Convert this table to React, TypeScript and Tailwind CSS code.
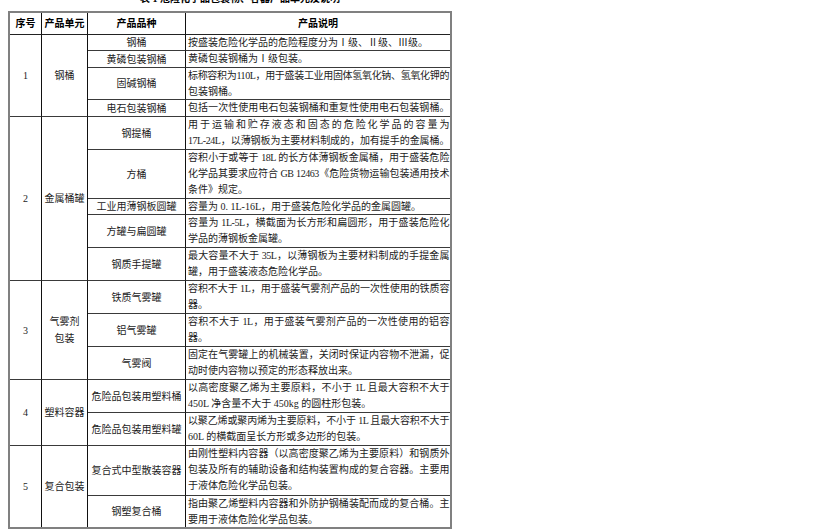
import React from 'react'

type Item = { name: string; lines: string[]; fullLast?: boolean }
type Group = { no: string; unit: string[]; span: string; items: Item[] }

const groups: Group[] = [
  {
    no: '1',
    unit: ['钢桶'],
    span: 'row-span-4',
    items: [
      { name: '钢桶', lines: ['按盛装危险化学品的危险程度分为Ⅰ级、Ⅱ级、Ⅲ级。'] },
      { name: '黄磷包装钢桶', lines: ['黄磷包装钢桶为Ⅰ级包装。'] },
      { name: '固碱钢桶', lines: ['标称容积为110L，用于盛装工业用固体氢氧化钠、氢氧化钾的', '包装钢桶。'] },
      { name: '电石包装钢桶', lines: ['包括一次性使用电石包装钢桶和重复性使用电石包装钢桶。'], fullLast: true },
    ],
  },
  {
    no: '2',
    unit: ['金属桶罐'],
    span: 'row-span-5',
    items: [
      {
        name: '钢提桶',
        lines: ['用于运输和贮存液态和固态的危险化学品的容量为', '17L-24L，以薄钢板为主要材料制成的，加有提手的金属桶。'],
        fullLast: true,
      },
      {
        name: '方桶',
        lines: [
          '容积小于或等于 18L 的长方体薄钢板金属桶，用于盛装危险',
          '化学品其要求应符合 GB 12463《危险货物运输包装通用技术',
          '条件》规定。',
        ],
      },
      { name: '工业用薄钢板圆罐', lines: ['容量为 0. 1L-16L，用于盛装危险化学品的金属圆罐。'] },
      { name: '方罐与扁圆罐', lines: ['容量为 1L-5L，横截面为长方形和扁圆形，用于盛装危险化', '学品的薄钢板金属罐。'] },
      { name: '钢质手提罐', lines: ['最大容量不大于 35L，以薄钢板为主要材料制成的手提金属', '罐，用于盛装液态危险化学品。'] },
    ],
  },
  {
    no: '3',
    unit: ['气雾剂', '包装'],
    span: 'row-span-3',
    items: [
      { name: '铁质气雾罐', lines: ['容积不大于 1L，用于盛装气雾剂产品的一次性使用的铁质容', '器。'] },
      { name: '铝气雾罐', lines: ['容积不大于 1L，用于盛装气雾剂产品的一次性使用的铝容', '器。'] },
      { name: '气雾阀', lines: ['固定在气雾罐上的机械装置，关闭时保证内容物不泄漏，促', '动时使内容物以预定的形态释放出来。'] },
    ],
  },
  {
    no: '4',
    unit: ['塑料容器'],
    span: 'row-span-2',
    items: [
      { name: '危险品包装用塑料桶', lines: ['以高密度聚乙烯为主要原料，不小于 1L 且最大容积不大于', '450L 净含量不大于 450kg 的圆柱形包装。'] },
      { name: '危险品包装用塑料罐', lines: ['以聚乙烯或聚丙烯为主要原料，不小于 1L 且最大容积不大于', '60L 的横截面呈长方形或多边形的包装。'] },
    ],
  },
  {
    no: '5',
    unit: ['复合包装'],
    span: 'row-span-2',
    items: [
      {
        name: '复合式中型散装容器',
        lines: [
          '由刚性塑料内容器（以高密度聚乙烯为主要原料）和钢质外',
          '包装及所有的辅助设备和结构装置构成的复合容器。主要用',
          '于液体危险化学品包装。',
        ],
      },
      { name: '钢塑复合桶', lines: ['指由聚乙烯塑料内容器和外防护钢桶装配而成的复合桶。主', '要用于液体危险化学品包装。'] },
    ],
  },
]

const font = "font-['Liberation_Serif','Noto_Sans_CJK_SC',serif]"

export default function App() {
  const cells: React.ReactNode[] = []

  groups.forEach((g, gi) => {
    const lastGroup = gi === groups.length - 1
    g.items.forEach((item, i) => {
      const lastRow = lastGroup && i === g.items.length - 1
      const bottom = lastRow ? '' : 'border-b border-b-[#3a3a3a]'
      if (i === 0) {
        cells.push(
          <div
            key={`no-${g.no}`}
            className={`${g.span} flex items-center justify-center border-r border-r-[#111] ${lastGroup ? '' : 'border-b border-b-[#3a3a3a]'}`}
          >
            {g.no}
          </div>,
          <div
            key={`unit-${g.no}`}
            className={`${g.span} flex flex-col items-center justify-center leading-[17px] border-r border-r-[#111] ${lastGroup ? '' : 'border-b border-b-[#3a3a3a]'}`}
          >
            {g.unit.map(u => (
              <span key={u}>{u}</span>
            ))}
          </div>
        )
      }
      cells.push(
        <div
          key={`name-${item.name}`}
          className={`flex items-center justify-center text-center border-r border-r-[#111] ${bottom}`}
        >
          {item.name}
        </div>,
        <div key={`desc-${item.name}`} className={`pl-[2px] pr-px leading-[16px] overflow-hidden ${bottom}`}>
          {item.lines.map((line, li) =>
            li < item.lines.length - 1 || item.fullLast ? (
              // full lines: squeeze a little so they fit, then spread to the cell width
              <div key={li} className="whitespace-nowrap tracking-[-0.45px] text-justify [text-align-last:justify]">
                {line}
              </div>
            ) : (
              <div key={li} className="whitespace-nowrap">
                {line}
              </div>
            )
          )}
        </div>
      )
    })
  })

  return (
    <div className={`min-h-screen bg-white flex flex-col text-[10px] text-[#1c1c1c] ${font}`}>
      <div className="-mt-[7px] ml-[8px] w-[444px] h-[12px] leading-[12px] pl-[20px] text-center font-bold text-black">
        表 1 危险化学品包装物、容器产品单元及说明
      </div>

      <div className="mt-[6px] ml-[8px] w-[444px] border-2 border-[#808080]">
        <div className="grid grid-cols-[32px_46px_98px_264px] grid-rows-[22px_16px_17px_32px_17px_33px_49px_16px_33px_33px_33px_33px_33px_33px_33px_50px_31px]">
          {['序号', '产品单元', '产品品种', '产品说明'].map((h, i) => (
            <div
              key={h}
              className={`flex items-center justify-center font-bold text-black border-b border-b-[#222] ${i < 3 ? 'border-r border-r-[#111]' : ''}`}
            >
              {h}
            </div>
          ))}
          {cells}
        </div>
      </div>
    </div>
  )
}
